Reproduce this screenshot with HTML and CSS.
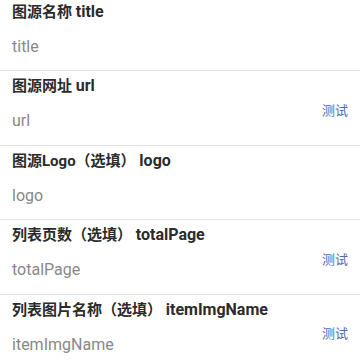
FILE: index.html
```html
<!DOCTYPE html>
<html lang="zh">
<head>
<meta charset="utf-8">
<link rel="stylesheet" href="styles.css">
</head>
<body>
<div class="list">
  <div class="field">
    <div class="label">图源名称 <span class="key">title</span></div>
    <div class="body"><span class="value">title</span></div>
  </div>
  <div class="field">
    <div class="label">图源网址 <span class="key">url</span></div>
    <div class="body"><span class="value">url</span><span class="test">测试</span></div>
  </div>
  <div class="field">
    <div class="label">图源Logo（选填） <span class="key">logo</span></div>
    <div class="body"><span class="value">logo</span></div>
  </div>
  <div class="field">
    <div class="label">列表页数（选填） <span class="key">totalPage</span></div>
    <div class="body"><span class="value">totalPage</span><span class="test">测试</span></div>
  </div>
  <div class="field">
    <div class="label">列表图片名称（选填） <span class="key">itemImgName</span></div>
    <div class="body"><span class="value">itemImgName</span><span class="test">测试</span></div>
  </div>
</div>
</body>
</html>
```
FILE: styles.css
```css
html, body {
  margin: 0;
  padding: 0;
  background: #fff;
  overflow: hidden;
}
body {
  width: 360px;
  height: 360px;
  font-family: Roboto, "Noto Sans CJK SC", sans-serif;
}
.list {
  margin-top: -3.5px;
}
.field {
  box-sizing: border-box;
  height: 74.5px;
  padding: 4px 12px 0;
  border-bottom: 1px solid #e3e3e3;
}
.label {
  font-size: 15px;
  font-weight: bold;
  line-height: 21px;
  color: #2b2b2b;
  white-space: nowrap;
}
.key {
  font-size: 16px;
}
.body {
  display: flex;
  align-items: flex-start;
  justify-content: space-between;
}
.value {
  margin-top: 13px;
  font-size: 16px;
  line-height: 22px;
  color: #888;
}
.test {
  margin-top: 4.5px;
  font-size: 13px;
  line-height: 18px;
  color: #5a68b5;
}
```
